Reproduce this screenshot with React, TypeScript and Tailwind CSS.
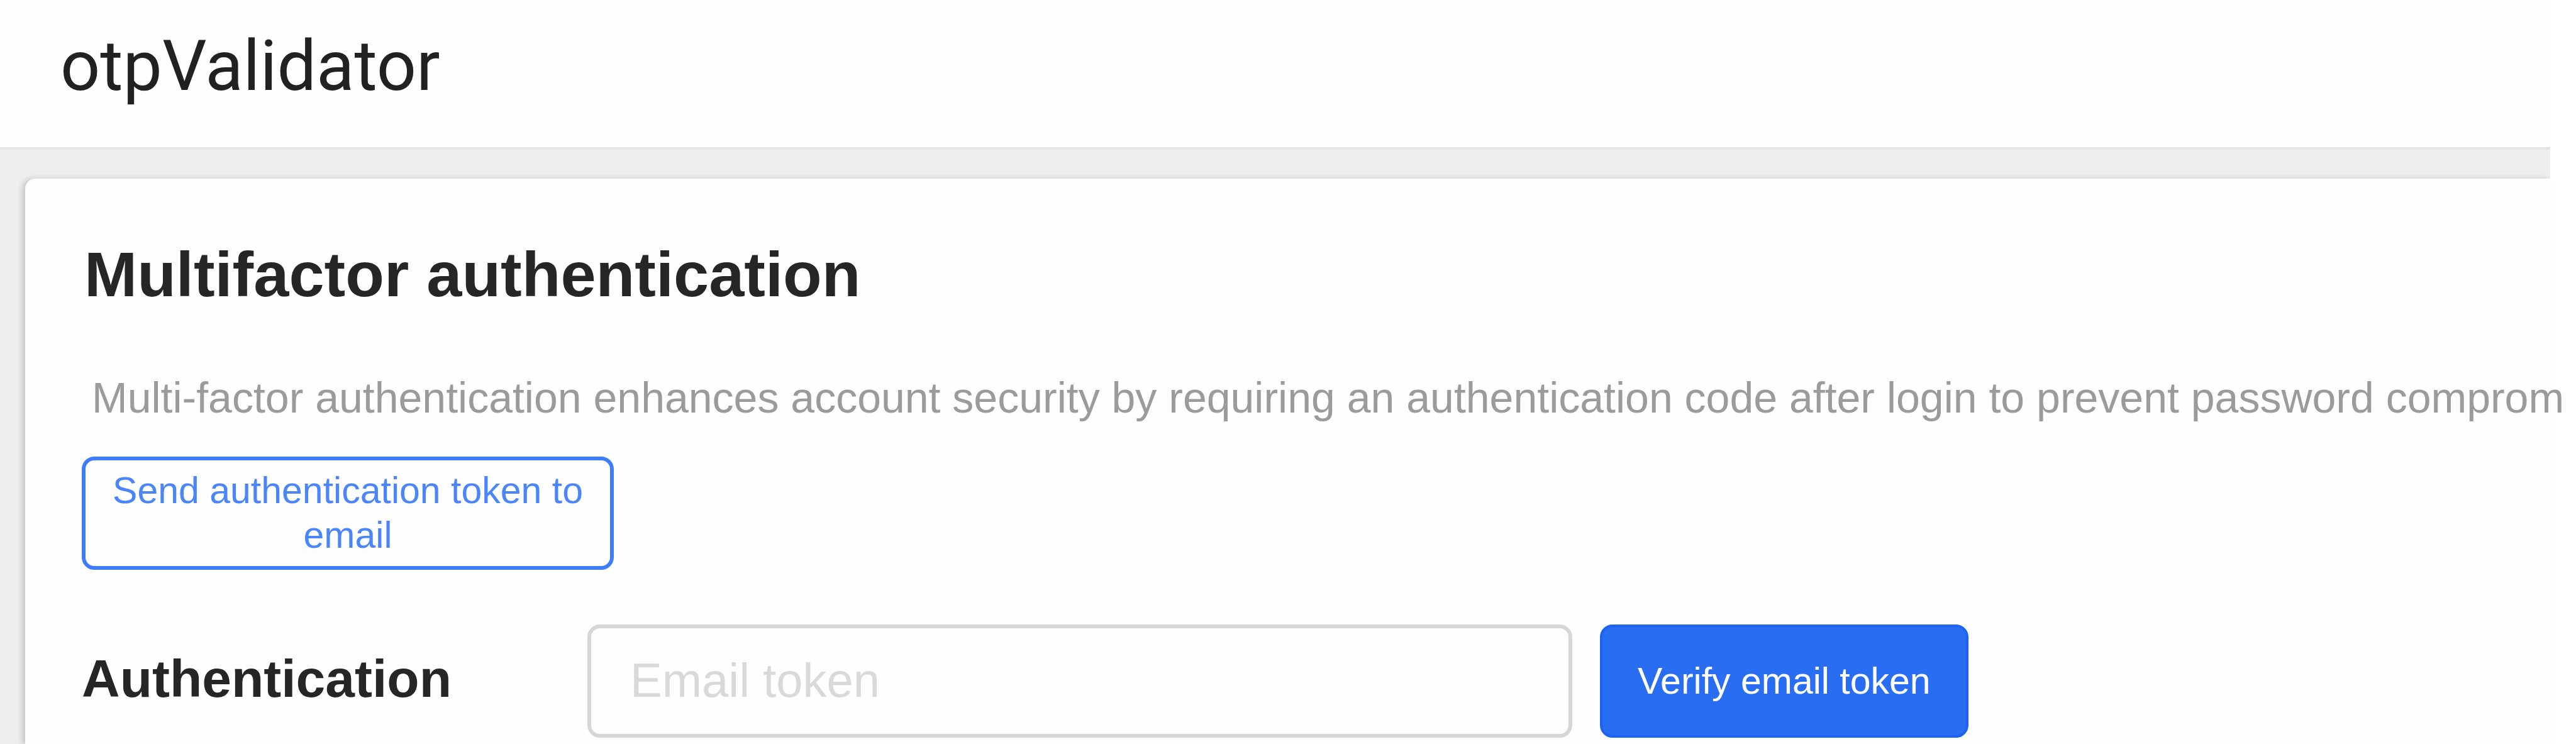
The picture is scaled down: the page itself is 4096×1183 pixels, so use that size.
import { useState } from "react";

export default function App() {
  const [token, setToken] = useState("");

  return (
    <div className="flex min-h-screen bg-white pr-[41px] font-['Liberation_Sans',Arial,sans-serif] text-[#262626]">
      <div className="flex min-w-0 flex-1 flex-col bg-[#eeeeee]">
        <header className="border-b-4 border-[#e3e3e3] bg-[#fefefe] pt-10 pb-16 pl-24">
          <div className="font-['Roboto',sans-serif] text-[111px] leading-[130px] text-[#212121]">
            otpValidator
          </div>
        </header>

        <main className="mt-[46px] ml-10 flex-1 rounded-tl-2xl bg-[#fefefe] pt-[92px] pl-[90px] shadow-[-5px_0_8px_rgba(0,0,0,0.16)]">
          <h1 className="pl-1 text-[101px] leading-[120px] font-bold">
            Multifactor authentication
          </h1>
          <p className="mt-24 pl-4 text-[68px] leading-[80px] whitespace-nowrap text-[#9b9b9b]">
            Multi-factor authentication enhances account security by requiring an authentication code after login to prevent password comprom
          </p>

          <button
            type="button"
            className="mt-[54px] block w-[846px] rounded-[20px] border-6 border-[#3f7df8] px-8 py-[13px] text-center text-[59px] leading-[71px] text-[#4a86f9]"
          >
            Send authentication token to email
          </button>

          <form className="mt-[87px] flex items-center" onSubmit={(e) => e.preventDefault()}>
            <label
              htmlFor="email-token"
              className="w-[804px] shrink-0 pb-2 text-[84px] leading-[100px] font-bold"
            >
              Authentication
            </label>
            <input
              id="email-token"
              type="text"
              value={token}
              onChange={(e) => setToken(e.target.value)}
              placeholder="Email token"
              className="h-[180px] max-w-[1566px] min-w-0 flex-1 rounded-[20px] border-6 border-[#d6d6d6] bg-[#fefefe] px-[62px] pb-1 text-[76px] outline-none placeholder:text-[#d9d9d9]"
            />
            <button
              type="submit"
              className="ml-11 h-[180px] shrink-0 rounded-[20px] border-4 border-[#1c63f4] bg-[#296df2] px-14 text-[59px] text-white"
            >
              Verify email token
            </button>
          </form>
        </main>
      </div>
    </div>
  );
}
